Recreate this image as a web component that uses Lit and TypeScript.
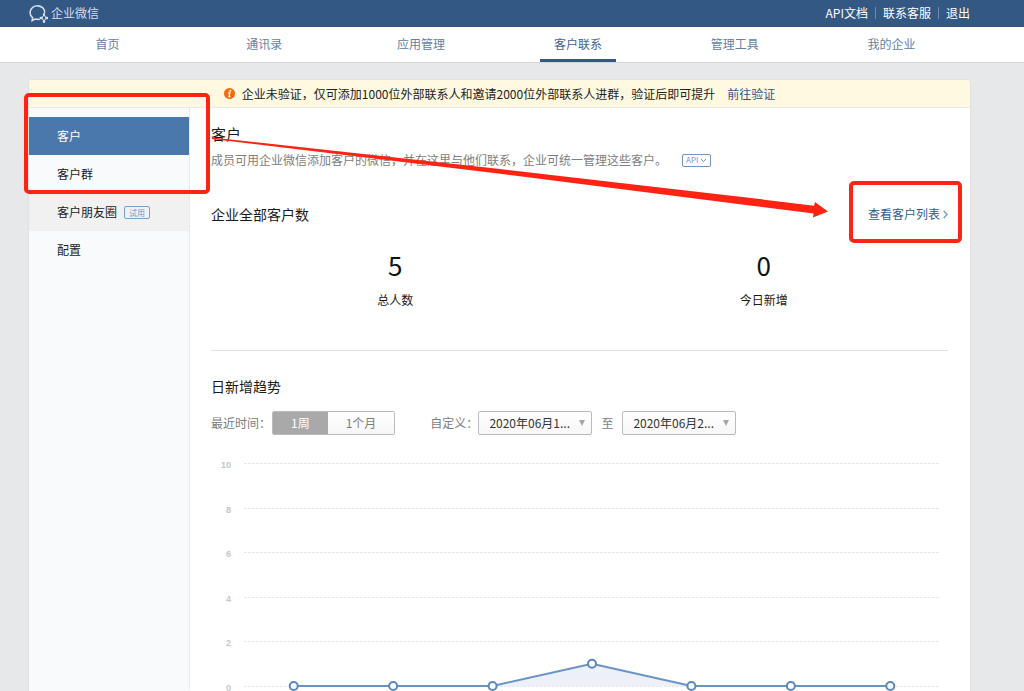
import { LitElement, html, svg, css } from "lit";
import { customElement, property, state } from "lit/decorators.js";
import { classMap } from "lit/directives/class-map.js";

@customElement("trend-chart")
class TrendChart extends LitElement {
  @property({ attribute: false }) values: number[] = [];
  @property({ type: Number }) max = 10;

  static styles = css`
    :host { display: block; }
    .plot { display: block; width: 100%; height: auto; }
    .tick { font: bold 9px "Liberation Sans", sans-serif; fill: #c4c7cc; text-anchor: end; }
    .grid { stroke: #e9e9e9; stroke-dasharray: 3 1; }
    .area { fill: #4a7ab3; fill-opacity: 0.1; }
    .line { fill: none; stroke: #6a94c6; stroke-width: 2; stroke-linejoin: round; }
    .dot { fill: #fff; stroke: #5a88bd; stroke-width: 2; }
  `;

  render() {
    const left = 33, right = 729, top = 7, bottom = 230;
    const y = (v: number) => bottom - (v / this.max) * (bottom - top);
    const band = (right - left) / this.values.length;
    const pts = this.values.map((v, i) => [left + band * (i + 0.5), y(v)]);
    const path = pts.map((p) => p.join(",")).join(" ");
    return html`<svg class="plot" viewBox="0 0 737 260" role="img" aria-label="日新增趋势">
      ${[10, 8, 6, 4, 2, 0].map((t) => svg`
        <line class="grid" x1=${left} x2=${right} y1=${Math.round(y(t)) + 0.5} y2=${Math.round(y(t)) + 0.5}></line>
        <text class="tick" x="20" y=${Math.round(y(t)) + 5}>${t}</text>`)}
      <polygon class="area" points=${path}></polygon>
      <polyline class="line" points=${path}></polyline>
      ${pts.map((p) => svg`<circle class="dot" cx=${p[0]} cy=${p[1]} r="4"></circle>`)}
    </svg>`;
  }
}

@customElement("app-root")
class AppRoot extends LitElement {
  @state() private nav = "客户联系";
  @state() private side = "客户";
  @state() private range = "1周";

  static styles = css`
    :host {
      display: block;
      position: relative;
      height: 100vh;
      overflow: hidden;
      background: #e7e8ea;
      color: #1a1a1a;
      font: 12px/18px "Noto Sans CJK SC", "Noto Sans", sans-serif;
    }
    * { box-sizing: border-box; }
    a { color: inherit; text-decoration: none; }
    button, select { font: inherit; color: inherit; margin: 0; cursor: pointer; }
    h1, h2, p, dl, dd { margin: 0; font-weight: normal; }
    .wrap { margin: 0 54px 0 29px; }
    .top { background: #335883; color: #fff; }
    .bar { display: flex; justify-content: space-between; align-items: center; height: 27px; padding-bottom: 1px; }
    .brand { display: flex; align-items: center; gap: 3px; color: #d5dfec; }
    .logo { width: 19px; height: 19px; fill: none; stroke: #d5dfec; stroke-width: 1.6; }
    .links { display: flex; align-items: center; }
    .links a + a { border-left: 1px solid #6f8bad; margin-left: 7px; padding-left: 7px; line-height: 12px; }
    .tabs { background: #fff; border-bottom: 1px solid #d5d6d8; }
    .row { display: grid; grid-template-columns: repeat(6, 1fr); justify-items: center; height: 35px; }
    .tab { width: 76px; height: 35px; line-height: 34px; text-align: center; color: #6580a3; }
    .tab.on { color: #41638e; box-shadow: inset 0 -3px #335883; }
    .card { margin-top: 17px; background: #fff; border-radius: 3px 3px 0 0; box-shadow: 0 0 2px #cccdd0; }
    .notice { display: flex; align-items: center; justify-content: center; height: 28px; background: #fef9e0; border-bottom: 1px solid #ebebe6; border-radius: 3px 3px 0 0; color: #222; }
    .info { width: 11px; height: 11px; margin-right: 7px; }
    .notice a { margin-left: 12px; color: #2f5785; }
    .body { display: grid; grid-template-columns: 161px 1fr; }
    .side { padding-top: 9px; background: #f9fafc; border-right: 1px dotted #d8dadd; }
    .item { display: flex; align-items: center; gap: 7px; height: 38px; padding-left: 28px; }
    .item.hover { background: #f1f1f2; }
    .item.on { background: #4a77ac; color: #fff; }
    .trial { border: 1px solid #78a0d0; border-radius: 2px; padding: 0 4px; color: #6d95c6; font-size: 8px; line-height: 11px; }
    .main { padding: 15px 22px 0 21px; }
    .title { font-size: 15px; line-height: 22px; }
    .desc { display: flex; align-items: center; gap: 15px; padding-top: 6px; color: #7d7d7d; }
    .api { display: flex; align-items: center; gap: 2px; height: 13px; padding: 0 3px; border: 1px solid #6d95c6; border-radius: 2px; background: #fff; color: #6d95c6; font-size: 8px; line-height: 10px; }
    .chev { width: 7px; height: 5px; fill: none; stroke: #6d95c6; }
    .head { display: flex; justify-content: space-between; align-items: center; margin-top: 35px; }
    .sub { font-size: 14px; line-height: 20px; }
    .more { display: flex; align-items: center; gap: 3px; color: #2f5e8c; }
    .go { width: 5px; height: 9px; fill: none; stroke: #7ba0c8; stroke-width: 1.4; }
    .stats { display: grid; grid-template-columns: 1fr 1fr; padding: 22px 0 41px; border-bottom: 1px solid #e2e2e2; text-align: center; }
    .stat { display: flex; flex-direction: column-reverse; gap: 7px; }
    .num { font-size: 26px; line-height: 38px; color: #111; }
    .trend { padding-top: 25px; }
    .filters { display: flex; align-items: center; margin: 15px 0 21px; color: #7d7d7d; }
    .seg { display: flex; margin: 0 35px 0 1px; border: 1px solid #bbb; border-radius: 2px; }
    .opt { height: 22px; padding: 0 18px; border: 0; background: linear-gradient(#fff, #f6f6f6); }
    .opt.on { background: #a9a9a9; color: #fff; }
    .date { appearance: none; width: 114px; height: 24px; padding: 0 10px; border: 1px solid #bbb; border-radius: 2px; color: #333;
      background: linear-gradient(#fff, #f7f7f7); }
    .pick { display: grid; align-items: center; }
    .pick > * { grid-area: 1 / 1; }
    .arrow { justify-self: end; width: 6px; height: 6px; margin-right: 7px; fill: #a5a5a5; pointer-events: none; }
    .to { margin: 0 9px; }
    .marks { position: absolute; left: 0; top: 0; width: 1024px; height: 691px; pointer-events: none; fill: none; stroke: #ff2314; stroke-width: 4; }
    .pointer { fill: #ff2314; stroke: none; }
  `;

  private link(name: string, key: "nav" | "side", cls: string, extra: unknown = "") {
    const classes = { [cls]: true, on: this[key] === name, hover: name === "客户朋友圈" };
    return html`<a href="#" class=${classMap(classes)}
      @click=${(e: Event) => { e.preventDefault(); this[key] = name; }}>${name}${extra}</a>`;
  }

  private picker(id: string, label: string) {
    return html`<span class="pick">
      <select class="date" id=${id} aria-label=${id === "from" ? "开始日期" : "结束日期"}><option>${label}</option></select>
      <svg class="arrow" viewBox="0 0 6 6"><path d="M0 0h6L3 6z"></path></svg>
    </span>`;
  }

  render() {
    return html`
      <header class="top"><div class="wrap bar">
        <a class="brand" href="#">
          <svg class="logo" viewBox="0 0 19 19">
            <path d="M10.800 15.200c-1.500.3-3 .3-4.600-.2L3.200 16.500l.4-2.900C.1 10.900.2 5.800 3.700 3.300c3.200-2.300 8-1.900 10.500.9 1.200 1.400 1.700 3 1.500 4.700"></path>
            <path d="M15 10.200v.8M18.200 14h-.8M15 17.800V17M11.800 14h.8" stroke-width="2.400" stroke-linecap="round"></path>
            <path d="M15 11l2.400 3L15 17l-2.400-3z" stroke-width="1"></path>
          </svg>
          <span>企业微信</span>
        </a>
        <nav class="links"><a href="#">API文档</a><a href="#">联系客服</a><a href="#">退出</a></nav>
      </div></header>
      <nav class="tabs"><div class="wrap row">
        ${["首页", "通讯录", "应用管理", "客户联系", "管理工具", "我的企业"].map((n) => this.link(n, "nav", "tab"))}
      </div></nav>
      <div class="wrap card">
        <div class="notice">
          <svg class="info" viewBox="0 0 11 11"><circle cx="5.500" cy="5.500" r="5.500" fill="#f56a0a"></circle><circle cx="6.300" cy="2.700" r="1" fill="#fff"></circle><path d="M4.200 4.800h1.600L5 8.500h1.300" fill="none" stroke="#fff" stroke-width="1.300"></path></svg>
          <span>企业未验证，仅可添加1000位外部联系人和邀请2000位外部联系人进群，验证后即可提升</span>
          <a href="#">前往验证</a>
        </div>
        <div class="body">
          <nav class="side">
            ${this.link("客户", "side", "item")}
            ${this.link("客户群", "side", "item")}
            ${this.link("客户朋友圈", "side", "item", html`<span class="trial">试用</span>`)}
            ${this.link("配置", "side", "item")}
          </nav>
          <main class="main">
            <h1 class="title">客户</h1>
            <div class="desc">
              <p>成员可用企业微信添加客户的微信，并在这里与他们联系，企业可统一管理这些客户。</p>
              <button class="api">API <svg class="chev" viewBox="0 0 7 5"><path d="M1 1l2.500 2.500L6 1"></path></svg></button>
            </div>
            <div class="head">
              <h2 class="sub">企业全部客户数</h2>
              <a class="more" href="#">查看客户列表<svg class="go" viewBox="0 0 5 9"><path d="M.7.700l3.300 3.800L.7 8.300"></path></svg></a>
            </div>
            <dl class="stats">
              <div class="stat"><dt>总人数</dt><dd class="num">5</dd></div>
              <div class="stat"><dt>今日新增</dt><dd class="num">0</dd></div>
            </dl>
            <section class="trend">
              <h2 class="sub">日新增趋势</h2>
              <div class="filters">
                <span>最近时间：</span>
                <div class="seg">
                  ${["1周", "1个月"].map((r) => html`<button class=${classMap({ opt: true, on: this.range === r })}
                    @click=${() => (this.range = r)}>${r}</button>`)}
                </div>
                <label for="from">自定义：</label>
                ${this.picker("from", "2020年06月1...")}
                <label class="to" for="to">至</label>
                ${this.picker("to", "2020年06月2...")}
              </div>
              <trend-chart .values=${[0, 0, 0, 1, 0, 0, 0]}></trend-chart>
            </section>
          </main>
        </div>
      </div>
      <svg class="marks" viewBox="0 0 1024 691" aria-hidden="true">
        <rect x="26" y="95" width="182" height="97" rx="3"></rect>
        <rect x="851" y="183" width="109" height="58" rx="3"></rect>
        <path class="pointer" d="M212 137.500L500 169L740 196.700L814 205.700L815 202L828 211.500L813 217.500L813.500 213.500L740 204.300L500 173.700L212 139z"></path>
      </svg>
    `;
  }
}
